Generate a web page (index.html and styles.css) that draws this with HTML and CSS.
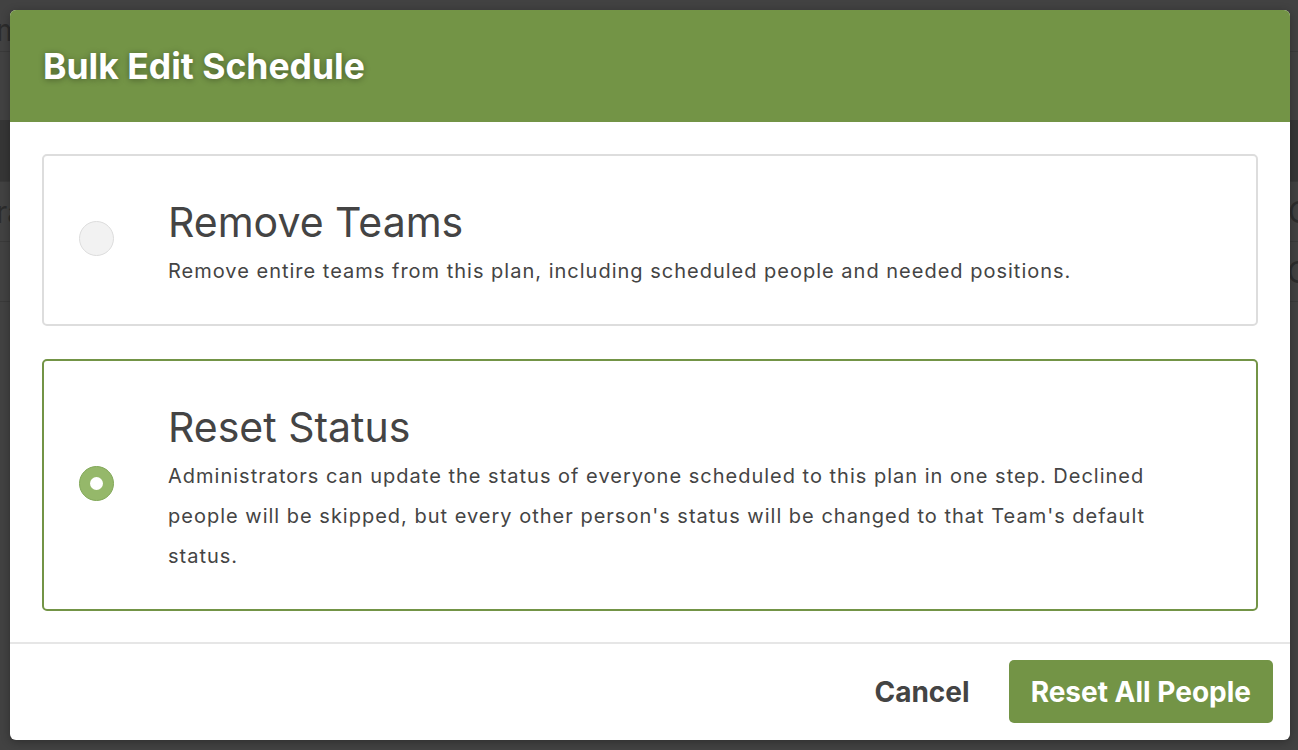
FILE: index.html
```html
<!DOCTYPE html>
<html>
<head>
<meta charset="utf-8">
<link rel="stylesheet" href="styles.css">
</head>
<body>
<div class="backdrop">
  <div class="bg-row bg-top"><span class="bg-text bg-left">m</span></div>
  <div class="bg-row bg-dark"></div>
  <div class="bg-row"><span class="bg-text bg-left">ra</span><span class="bg-text bg-right">C</span></div>
  <div class="bg-row"><span class="bg-text bg-right">O</span></div>
</div>
<div class="modal">
  <header class="modal-header">
    <h1 class="modal-title">Bulk Edit Schedule</h1>
  </header>
  <div class="modal-body">
    <label class="option">
      <span class="radio"></span>
      <span class="option-text">
        <span class="option-title">Remove Teams</span>
        <span class="option-desc">Remove entire teams from this plan, including scheduled people and needed positions.</span>
      </span>
    </label>
    <label class="option option-selected">
      <span class="radio radio-checked"><span class="radio-dot"></span></span>
      <span class="option-text">
        <span class="option-title">Reset Status</span>
        <span class="option-desc">Administrators can update the status of everyone scheduled to this plan in one step. Declined people will be skipped, but every other person's status will be changed to that Team's default status.</span>
      </span>
    </label>
  </div>
  <footer class="modal-footer">
    <button class="btn btn-link">Cancel</button>
    <button class="btn btn-primary">Reset All People</button>
  </footer>
</div>
</body>
</html>
```
FILE: styles.css
```css
* { box-sizing: border-box; }
html, body { margin: 0; padding: 0; }
body {
  width: 1298px;
  height: 750px;
  overflow: hidden;
  background: #424242;
  font-family: Inter, "Noto Sans", "Liberation Sans", sans-serif;
  position: relative;
}
.backdrop {
  position: absolute;
  inset: 0;
  display: flex;
  flex-direction: column;
}
.bg-row {
  height: 60px;
  border-bottom: 1px solid #3a3a3a;
  position: relative;
}
.bg-top { height: 52px; }
.bg-dark { height: 62px; margin-top: 68px; background: #363636; }
.bg-text {
  position: absolute;
  top: 12px;
  color: #2c2c2c;
  font-size: 30px;
}
.bg-left { left: -4px; }
.bg-right { right: -12px; }

.modal {
  position: absolute;
  left: 10px;
  top: 10px;
  width: 1280px;
  height: 730px;
  background: #fff;
  border-radius: 6px;
  overflow: hidden;
  display: flex;
  flex-direction: column;
  box-shadow: 0 2px 10px rgba(0,0,0,0.3);
}
.modal-header {
  height: 112px;
  flex: none;
  background: #739446;
  display: flex;
  align-items: center;
  padding: 0 33px;
}
.modal-title {
  margin: 0;
  color: #fff;
  font-size: 35.5px;
  font-weight: 700;
  text-shadow: 0 1px 6px rgba(0,0,0,0.35);
}
.modal-body {
  padding: 32px 32px 0;
  display: flex;
  flex-direction: column;
  gap: 33px;
  flex: 1;
}
.option {
  display: flex;
  align-items: center;
  border: 2px solid #dddddd;
  border-radius: 5px;
  padding: 38px 36px 33px 35px;
}
.option-selected { border-color: #739446; }
.radio {
  flex: none;
  width: 35px;
  height: 35px;
  border-radius: 50%;
  background: #f2f2f2;
  border: 1px solid #dcdcdc;
  margin-right: 54px;
  margin-bottom: 8px;
  display: flex;
  align-items: center;
  justify-content: center;
}
.radio-checked {
  background: #95b86a;
  border-color: #82a859;
}
.radio-dot {
  width: 13px;
  height: 13px;
  border-radius: 50%;
  background: #fff;
}
.option-text {
  display: flex;
  flex-direction: column;
}
.option-title {
  font-size: 41px;
  line-height: 57px;
  color: #444;
  font-weight: 400;
}
.option-desc {
  font-size: 20px;
  line-height: 40px;
  color: #444;
  letter-spacing: 1px;
}
.modal-footer {
  flex: none;
  height: 98px;
  border-top: 2px solid #e6e6e6;
  display: flex;
  justify-content: flex-end;
  align-items: center;
  padding: 0 17px 1px;
  gap: 17px;
}
.btn {
  font-family: inherit;
  font-size: 28px;
  font-weight: 700;
  border: none;
  border-radius: 5px;
  height: 63px;
  padding: 0 22px;
  cursor: pointer;
}
.btn-link {
  background: transparent;
  color: #444;
}
.btn-primary {
  background: #739446;
  color: #fff;
}
```
